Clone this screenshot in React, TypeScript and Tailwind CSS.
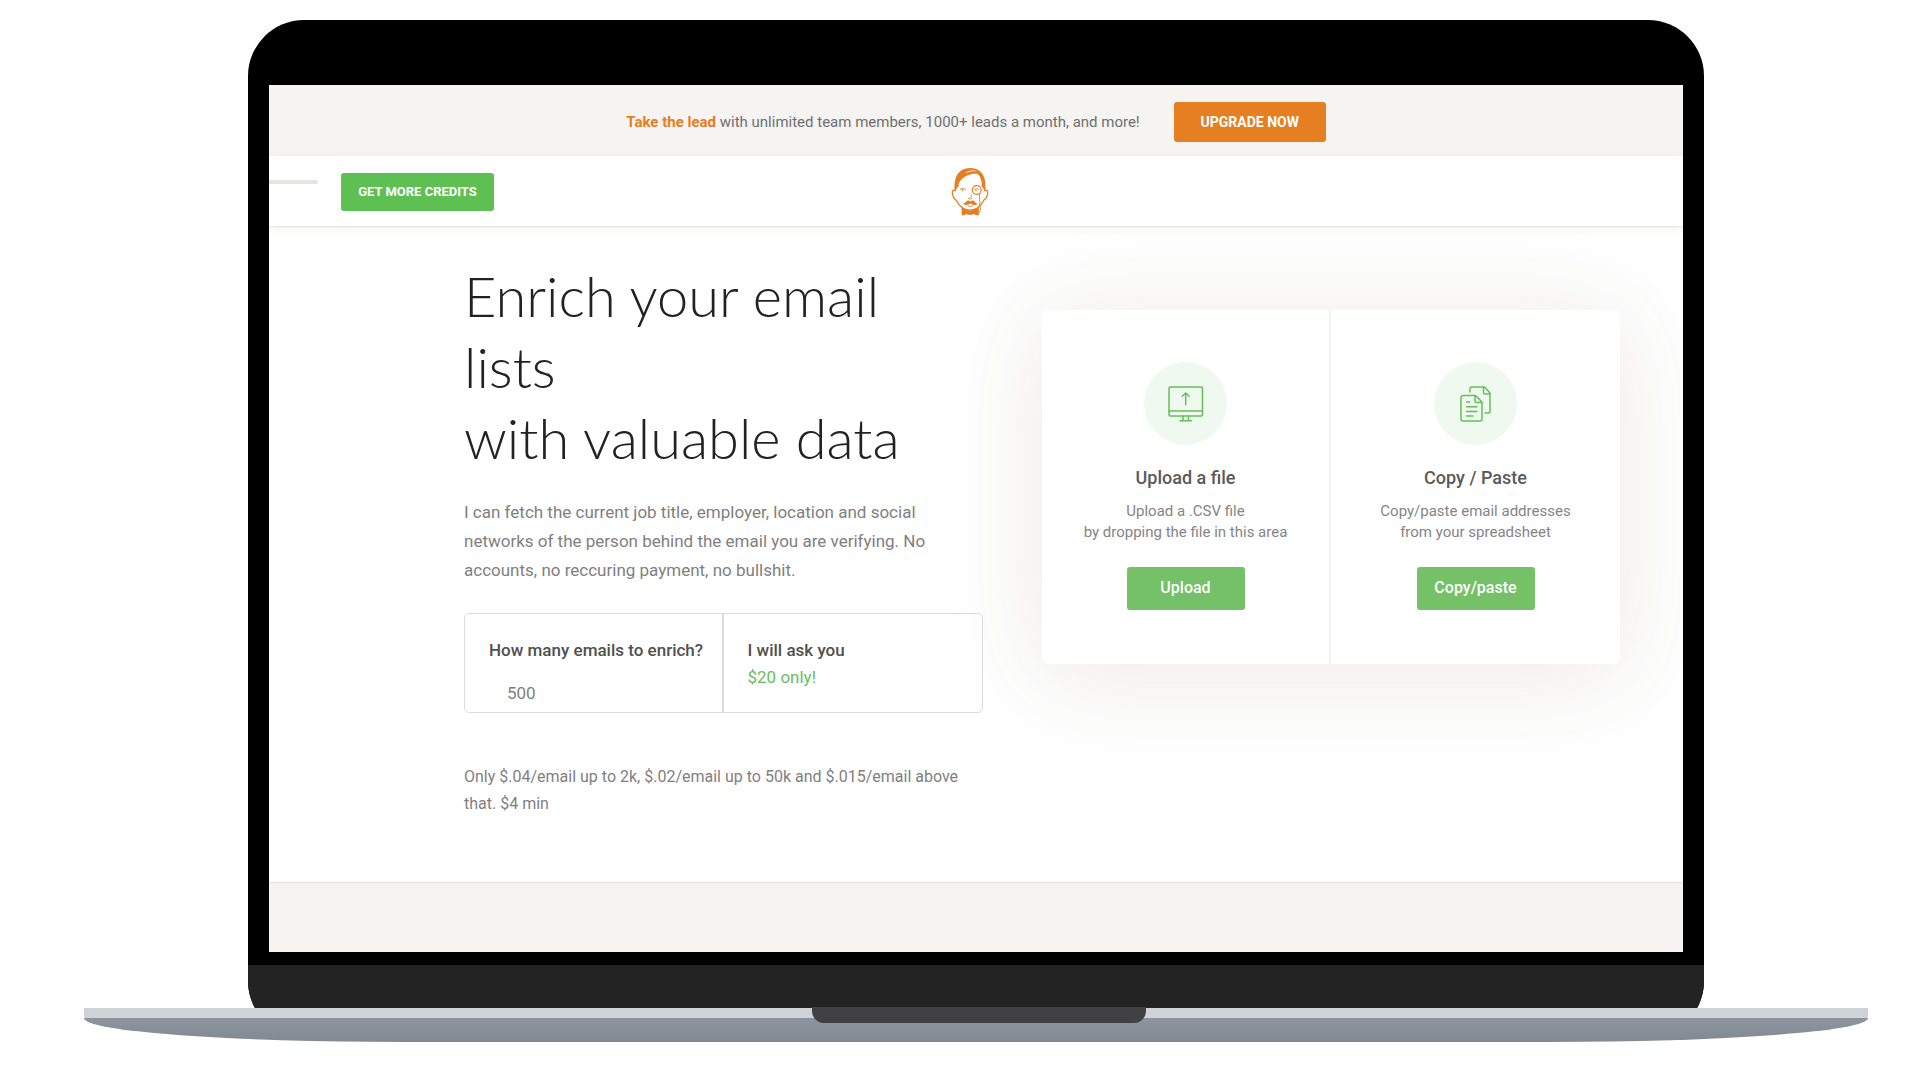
import { useState } from "react";
import type { ReactNode } from "react";

const ButlerLogo = () => (
  <svg width="40" height="52" viewBox="0 0 40 52" fill="none" aria-hidden="true">
    <path d="M11.500 40.500 18.400 44.200h3.800l6.600-3.700v8.900l-3.200-.5-1.600-1-2 .9h-3.600l-2-.9-1.600 1-3 .5Z" fill="#e67e22" />
    <path
      d="M5 24.500C3 23.600 1.900 25 2.400 27.600c.5 2.900 1.500 5.400 3.500 6.200 1.700 3.500 3.900 6.200 6.900 8.300 2.300 1.500 4.600 2.100 7.200 2.100s4.900-.6 7.200-2.100c3-2.100 5.200-4.800 6.900-8.300 2-.8 3-3.300 3.500-6.200.5-2.600-.6-4-2.600-3.100L33 16 20 6 7 16Z"
      fill="#fff"
    />
    <g stroke="#e67e22" strokeLinecap="round" strokeLinejoin="round">
      <path
        d="M5 24.500C3 23.600 1.900 25 2.400 27.600c.5 2.900 1.500 5.400 3.500 6.200 1.700 3.500 3.900 6.200 6.900 8.300 2.300 1.500 4.600 2.100 7.200 2.100s4.900-.6 7.200-2.100c3-2.100 5.200-4.800 6.900-8.300 2-.8 3-3.300 3.500-6.200.5-2.600-.6-4-2.600-3.100"
        strokeWidth="1.300"
      />
      <path d="M10.200 23.400c1.400-1.200 3.800-1.200 5.200.1M12.400 23.600v1.200" strokeWidth="1" />
      <circle cx="26.700" cy="24" r="4.400" strokeWidth="1.200" />
      <path d="M24.200 23.500c1.400-1 3.500-1 4.800.1M26 24v1.200" strokeWidth=".9" />
      <path d="M29.600 27.400c-.8 4 .8 8 .2 12 1 3 .9 6.400-1.200 8" strokeWidth=".9" />
      <path d="M21.800 28.500c.2 1.800-.6 2.600-2 3.400M18.400 32.300l1.600.9 1.600-.9" strokeWidth=".8" />
      <path d="M18 39.800c1.500.8 3.500.8 5 0" strokeWidth=".9" />
    </g>
    <path
      d="M5 26.300C4 21 4.400 16 5.600 12.500 7.600 5.800 13 2 20.200 2S32.500 5.800 34.500 12.500C35.600 16 36 21 35 26.300L33.400 22.600 31.600 20.500c.2-2.400.2-4.500-.6-6.400-.6-2.800-1.600-4.800-3.700-6.300-6.200-.7-12.300 1.500-17.200 7.200C8.700 17 8.600 18.500 8.500 20.500L6.700 22.600Z"
      fill="#e67e22"
    />
    <path d="M15.500 6.900c3.600-2.400 8.200-2.900 11.600-1.600-3.600-.3-7.600.2-11.600 1.600ZM17.500 4.700c1.800-.9 3.800-1.200 5.500-1-1.800.1-3.600.4-5.500 1Z" fill="#fff" />
    <path
      d="M20.400 35.400c-1.300-1.300-3.400-1.100-4.500.4-.7 1.200-1.600 1.900-2.900 1.700 1.200 2 5.200 1.900 7.400.1 2.200 1.800 6.200 1.900 7.400-.1-1.300.2-2.200-.5-2.900-1.700-1.100-1.500-3.200-1.700-4.500-.4Z"
      fill="#e67e22"
    />
  </svg>
);

const MonitorIcon = () => (
  <svg width="36" height="36" viewBox="0 0 36 36" fill="none" stroke="#66bd58" strokeWidth="1.500" strokeLinecap="round" strokeLinejoin="round" aria-hidden="true">
    <rect x="1" y="1" width="33.500" height="29" rx="1.500" />
    <path d="M1 25h33.500M15 30v4.500M20.500 30v4.500M12 34.700h11.500M17.700 18.500V7M14.200 10.300 17.700 7l3.500 3.300" />
  </svg>
);

const PagesIcon = () => (
  <svg width="32" height="36" viewBox="0 0 32 36" fill="none" stroke="#66bd58" strokeWidth="1.500" strokeLinecap="round" strokeLinejoin="round" aria-hidden="true">
    <path d="M10 6V2.500A1.500 1.500 0 0 1 11.500 1h13L30 7v18.500a1.500 1.500 0 0 1-1.500 1.500H25M23.500 1v5.500A1.500 1.500 0 0 0 25 8h5" />
    <path d="M3 9.500h12.500l6.500 6.500v17a2 2 0 0 1-2 2H3a2 2 0 0 1-2-2V11.500a2 2 0 0 1 2-2ZM15 9.500v5.500a1.500 1.500 0 0 0 1.500 1.500H22" />
    <path d="M6.500 16h3M6.500 20.700h10.500M6.500 25.500h10.500M6.500 30h6.500" />
  </svg>
);

type SourceProps = {
  icon: ReactNode;
  title: string;
  lines: [string, string];
  action: string;
};

const Source = ({ icon, title, lines, action }: SourceProps) => (
  <div className="flex flex-col items-center pt-[52px] pb-[54px] text-center">
    <div className="flex h-[83px] w-[83px] items-center justify-center rounded-full bg-[#f0f9f0]">
      {icon}
    </div>
    <h2 className="mt-[21px] text-[18px] leading-6 font-medium text-[#5a5a5a]">
      {title}
    </h2>
    <p className="mt-[11px] text-[15px] leading-[21px] text-[#858585]">
      {lines[0]}
      <br />
      {lines[1]}
    </p>
    <button className="mt-6 h-[43px] w-[118px] rounded-[3px] bg-[#74c168] pb-px text-[16px] font-medium text-white">
      {action}
    </button>
  </div>
);

const Banner = () => (
  <div className="flex h-[71px] items-center justify-center gap-[34px] bg-[#f6f4f2] pt-[3px]">
    <p className="text-[15px] text-[#6f6f6f]">
      <a href="#upgrade" className="font-bold text-[#e67e22]">
        Take the lead
      </a>{" "}
      with unlimited team members, 1000+ leads a month, and more!
    </p>
    <button className="h-10 w-[152px] rounded-[3px] bg-[#e67e22] text-[14px] font-bold text-white">
      UPGRADE NOW
    </button>
  </div>
);

const Navbar = () => (
  <header className="grid h-[71px] grid-cols-[1fr_auto_1fr] items-center border-b border-[#e6e4de] pt-px pr-3 shadow-[0_2px_8px_rgba(0,0,0,0.06)]">
    <div className="flex items-center gap-[23px]">
      <div className="mb-5 h-1 w-[49px] rounded-r-full bg-[#e6e4df]" />
      <button className="h-[38px] w-[153px] rounded-[3px] bg-[#5ebf52] text-[13px] font-bold text-white">
        GET MORE CREDITS
      </button>
    </div>
    <a href="#home" aria-label="Home">
      <ButlerLogo />
    </a>
  </header>
);

const Hero = () => {
  const [count, setCount] = useState("500");

  return (
    <main className="grid grid-cols-[519fr_578fr] items-start gap-[59px] pr-[63px] pb-[65px] pl-[195px]">
      <section className="pt-[33px]">
        <h1 className="font-['Lato',sans-serif] text-[56px] leading-[71px] font-light text-[#222]">
          Enrich your email
          <br />
          lists
          <br />
          with valuable data
        </h1>
        <p className="mt-[25px] text-[17px] leading-[29px] text-[#7f7f7f]">
          I can fetch the current job title, employer, location and social
          <br />
          networks of the person behind the email you are verifying. No
          <br />
          accounts, no reccuring payment, no bullshit.
        </p>

        <div className="mt-7 grid h-[100px] grid-cols-2 rounded-[5px] border border-[#dcdcdc]">
          <div className="border-r-2 border-[#dcdcdc] pt-[23px] pl-6">
            <label htmlFor="emails" className="block text-[17px] leading-[27px] font-medium text-[#505050]">
              How many emails to enrich?
            </label>
            <input
              id="emails"
              type="text"
              inputMode="numeric"
              value={count}
              onChange={(e) => setCount(e.target.value)}
              className="mt-4 block h-[27px] w-40 pl-[18px] text-[17px] leading-[27px] text-[#7f7f7f] outline-none"
            />
          </div>
          <div className="pt-[23px] pl-6 text-[17px] leading-[27px]">
            <p className="font-medium text-[#505050]">I will ask you</p>
            <p className="text-[#6bbd5e]">$20 only!</p>
          </div>
        </div>

        <p className="mt-[50px] text-[16px] leading-[27px] text-[#7f7f7f]">
          Only $.04/email up to 2k, $.02/email up to 50k and $.015/email above
          <br />
          that. $4 min
        </p>
      </section>

      <section className="mt-[83px] grid grid-cols-2 divide-x-2 divide-[#f3f3f3] rounded-md bg-white shadow-[0_10px_100px_rgba(90,75,50,0.12)]">
        <Source
          icon={<MonitorIcon />}
          title="Upload a file"
          lines={["Upload a .CSV file", "by dropping the file in this area"]}
          action="Upload"
        />
        <Source
          icon={<PagesIcon />}
          title="Copy / Paste"
          lines={["Copy/paste email addresses", "from your spreadsheet"]}
          action="Copy/paste"
        />
      </section>
    </main>
  );
};

const App = () => (
  <div className="bg-white pt-5 pr-[52px] pb-[38px] pl-[84px] font-['Roboto',sans-serif]">
    <div className="mx-[164px] overflow-hidden">
      <div className="-mb-[29px] overflow-hidden rounded-[56px] bg-black">
        <div className="mx-[21px] mt-[65px] mb-[13px] bg-white">
          <Banner />
          <Navbar />
          <Hero />
          <footer className="h-[70px] border-t border-[#e4e2df] bg-[#f5f4f2]" />
        </div>
        <div className="h-[72px] bg-[#232323]" />
      </div>
    </div>

    <div className="flex flex-col items-center">
      <div className="h-[10px] w-full bg-[#cfd3d6]" />
      <div className="h-6 w-full bg-linear-to-b from-[#8d949f] to-[#808a91] [border-radius:0_0_320px_320px/0_0_24px_24px]" />
      {/* thumb notch, overlaps the deck */}
      <div className="-mt-[35px] mb-5 ml-1.5 h-4 w-[334px] rounded-b-[12px] bg-[#414042]" />
    </div>
  </div>
);

export default App;
